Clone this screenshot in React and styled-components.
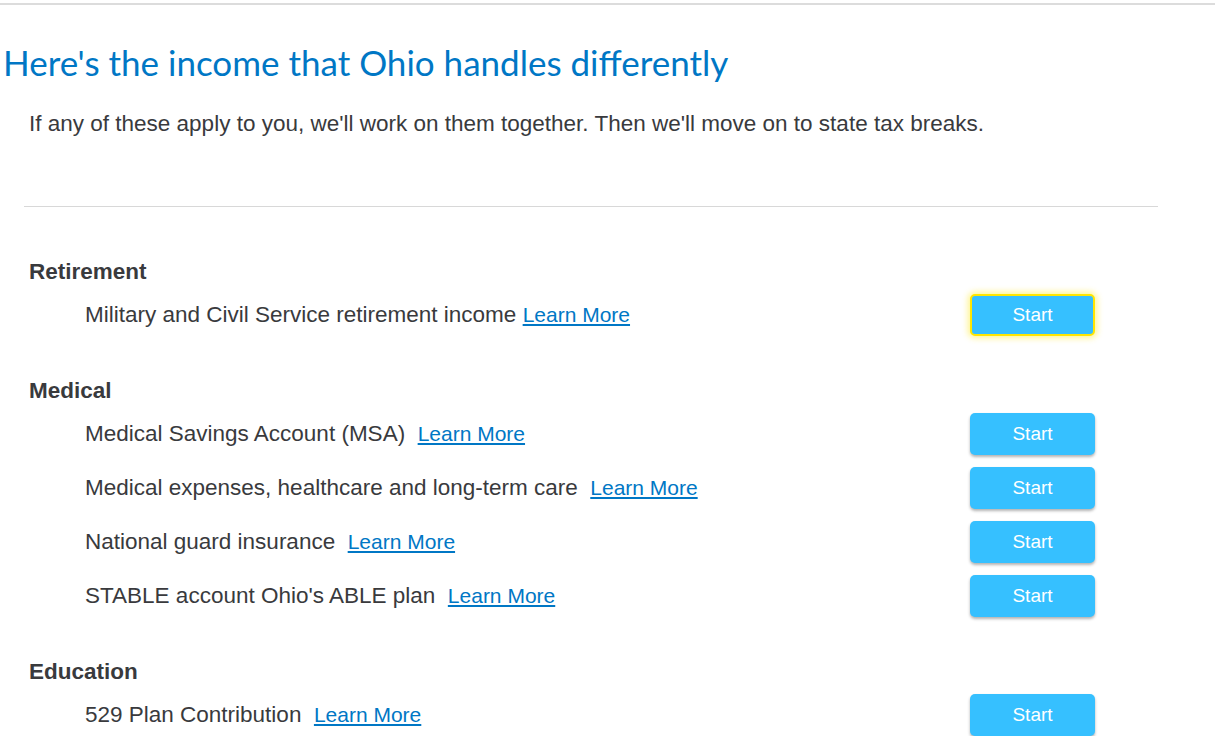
import React from "react";
import styled, { createGlobalStyle } from "styled-components";

const Global = createGlobalStyle`
  body {
    margin: 0;
    background: #fff;
    font-family: "Liberation Sans", Arial, sans-serif;
    color: #393a3d;
  }
`;

const Page = styled.div`
  width: 1215px;
  border-top: 2px solid #dcdcdc;
  margin-top: 3px;
`;

const Heading = styled.h1`
  margin: 37px 0 0 3px;
  font-family: "Lato", "Open Sans", sans-serif;
  font-weight: 400;
  font-size: 35px;
  line-height: 40px;
  color: #0077c5;
`;

const Intro = styled.p`
  margin: 29px 0 0 29px;
  font-size: 22.5px;
  line-height: 26px;
`;

const Divider = styled.hr`
  margin: 69px 0 0 24px;
  width: 1134px;
  border: none;
  border-top: 1px solid #d8d8d8;
`;

const Sections = styled.div`
  padding: 52px 0 0 29px;
  display: flex;
  flex-direction: column;
  gap: 42px;
`;

const Section = styled.section`
  display: flex;
  flex-direction: column;
`;

const SectionTitle = styled.h2`
  margin: 0 0 9px;
  font-size: 22.5px;
  line-height: 26px;
  font-weight: 700;
`;

const Rows = styled.div`
  display: flex;
  flex-direction: column;
  gap: 12px;
`;

const Row = styled.div`
  display: grid;
  grid-template-columns: 885px 125px;
  align-items: center;
  padding-left: 56px;
`;

const Label = styled.span`
  font-size: 22.5px;
  line-height: 26px;
  white-space: pre;
`;

const LearnMore = styled.a`
  font-size: 21px;
  color: #0077c5;
  text-decoration: underline;
  cursor: pointer;
`;

const StartButton = styled.button`
  width: 125px;
  height: 42px;
  border: ${(p) => (p.$focused ? "2px solid #ffe600" : "none")};
  border-radius: 5px;
  background: #36c0ff;
  color: #fff;
  font-family: "Liberation Sans", Arial, sans-serif;
  font-size: 19px;
  cursor: pointer;
  box-shadow: ${(p) =>
    p.$focused
      ? "0 0 6px 2px rgba(255, 230, 0, 0.45)"
      : "0 2px 3px rgba(0, 0, 0, 0.3)"};
`;

const sections = [
  {
    title: "Retirement",
    items: [{ label: "Military and Civil Service retirement income ", focused: true }],
  },
  {
    title: "Medical",
    items: [
      { label: "Medical Savings Account (MSA)  " },
      { label: "Medical expenses, healthcare and long-term care  " },
      { label: "National guard insurance  " },
      { label: "STABLE account Ohio's ABLE plan  " },
    ],
  },
  {
    title: "Education",
    items: [{ label: "529 Plan Contribution  " }],
  },
];

export default function App() {
  return (
    <Page>
      <Global />
      <Heading>Here's the income that Ohio handles differently</Heading>
      <Intro>
        If any of these apply to you, we'll work on them together. Then we'll move on to state tax breaks.
      </Intro>
      <Divider />
      <Sections>
        {sections.map((s) => (
          <Section key={s.title}>
            <SectionTitle>{s.title}</SectionTitle>
            <Rows>
              {s.items.map((item) => (
                <Row key={item.label}>
                  <Label>
                    {item.label}
                    <LearnMore>Learn More</LearnMore>
                  </Label>
                  <StartButton $focused={item.focused}>Start</StartButton>
                </Row>
              ))}
            </Rows>
          </Section>
        ))}
      </Sections>
    </Page>
  );
}
